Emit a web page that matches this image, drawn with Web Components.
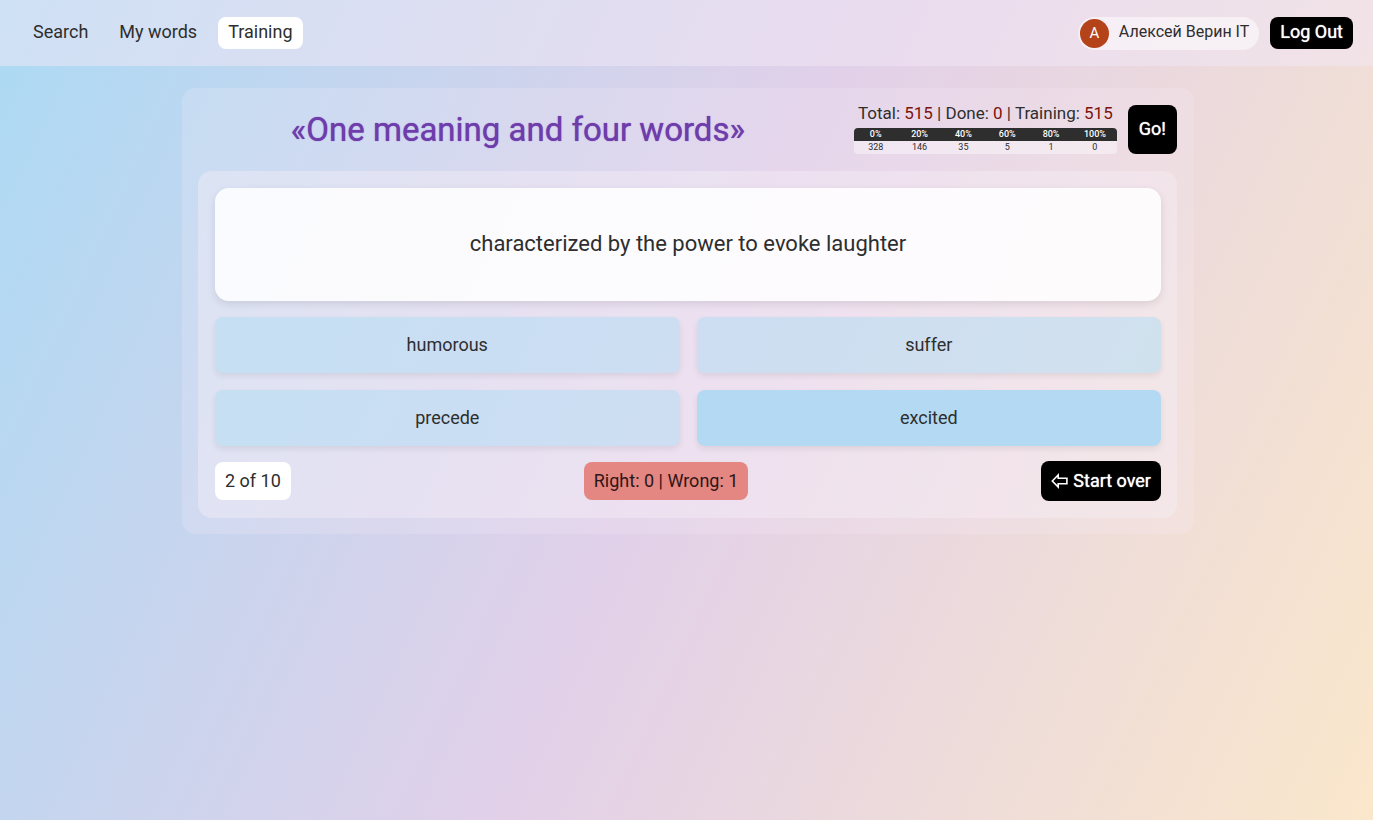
<!DOCTYPE html>
<html lang="en">
<head>
<meta charset="utf-8">
<meta name="viewport" content="width=device-width, initial-scale=1">
<title>Training</title>
<style>
html { min-height: 100%; background: linear-gradient(115deg, #acdaf4 0%, #e2d0e9 50%, #fae7cb 100%); }
body { margin: 0; font: 18px/22px Roboto, "Liberation Sans", sans-serif; color: #2e2e2e; }
</style>
</head>
<body>
<training-app></training-app>
<script>
const define = (name, html) => {
  const template = document.createElement('template');
  template.innerHTML = html;
  customElements.define(name, class extends HTMLElement {
    constructor() {
      super();
      this.attachShadow({ mode: 'open' }).append(template.content.cloneNode(true));
    }
  });
};

define('nav-link', `
<style>
:host { display: block; }
a { display: block; padding: 4px 10px 6px; border-radius: 8px; color: inherit; text-decoration: none; }
:host([current]) a { background: #fff; }
</style>
<a href="#"><slot></slot></a>`);

define('dark-button', `
<style>
:host { display: block; }
button { font: inherit; color: #fff; background: #000; border: 0; border-radius: 8px; margin: 0;
  display: flex; align-items: center; gap: 5px; cursor: pointer; white-space: nowrap;
  padding: var(--button-padding, 4px 10px 6px); text-shadow: 0 0 1px #fff; }
</style>
<button type="button"><slot></slot></button>`);

define('user-chip', `
<style>
:host { display: flex; align-items: center; gap: 10px; height: 33px; box-sizing: border-box;
  padding: 0 10px 0 2px; border-radius: 17px; background: rgba(255,255,255,.5); font-size: 16px; }
.avatar { width: 29px; height: 29px; border-radius: 50%; background: #b5431a; color: #fff;
  display: grid; place-items: center; font-size: 15px; }
.name { padding-bottom: 2px; }
</style>
<span class="avatar">А</span><span class="name"><slot></slot></span>`);

define('site-header', `
<style>
:host { display: flex; justify-content: space-between; align-items: center; height: 66px;
  box-sizing: border-box; padding: 0 20px 0 23px; background: rgba(242,232,245,.5); }
nav, div { display: flex; align-items: center; gap: 11px; }
</style>
<nav><nav-link>Search</nav-link><nav-link>My words</nav-link><nav-link current>Training</nav-link></nav>
<div><user-chip>Алексей Верин IT</user-chip><dark-button>Log Out</dark-button></div>`);

define('word-stats', `
<style>
:host { display: flex; flex-direction: column; justify-content: space-between; flex: none; width: 263px; height: 49px; }
p { margin: 0; font-size: 17px; line-height: 16px; white-space: nowrap; text-align: center; }
b { font-weight: 400; color: #7d120b; }
table { width: 100%; table-layout: fixed; border-collapse: collapse; border-radius: 4px; overflow: hidden;
  font-size: 9px; line-height: 13px; text-align: center; background: rgba(255,255,255,.4); }
th, td { padding: 0; }
th { font-weight: 500; color: #fff; background: #2e2e2e; }
</style>
<p>Total: <b>515</b> | Done: <b>0</b> | Training: <b>515</b></p>
<table>
<thead><tr><th>0%</th><th>20%</th><th>40%</th><th>60%</th><th>80%</th><th>100%</th></tr></thead>
<tbody><tr><td>328</td><td>146</td><td>35</td><td>5</td><td>1</td><td>0</td></tr></tbody>
</table>`);

define('answer-option', `
<style>
:host { display: block; }
button { width: 100%; height: 56px; font: inherit; color: inherit; border: 0; border-radius: 8px; cursor: pointer;
  background: rgba(173,219,244,.5); box-shadow: 0 3px 6px rgba(0,0,0,.08); }
:host([active]) button { background: #b4daf3; }
</style>
<button type="button"><slot></slot></button>`);

define('status-pill', `
<style>
:host { display: block; padding: 8px 10px; border-radius: 8px; background: #fff; }
:host([kind=score]) { background: #e48681; color: #2e1616; }
</style>
<slot></slot>`);

define('quiz-panel', `
<style>
:host { display: block; padding: 17px 16px 17px 17px; border-radius: 14px; background: rgba(248,240,248,.4); }
.question { display: grid; place-items: center; min-height: 111px; padding-bottom: 2px; margin-bottom: 16px; border-radius: 14px;
  background: rgba(255,255,255,.85); box-shadow: 0 3px 8px rgba(0,0,0,.1); font-size: 22px; line-height: 28px; }
.options { display: grid; grid-template-columns: 1fr 1fr; gap: 17px; }
footer { display: flex; justify-content: space-between; align-items: center; margin-top: 15px; }
dark-button { --button-padding: 9px 10px; }
svg { display: block; width: 17px; height: 16px; }
</style>
<div class="question">characterized by the power to evoke laughter</div>
<div class="options">
<answer-option>humorous</answer-option><answer-option>suffer</answer-option>
<answer-option>precede</answer-option><answer-option active>excited</answer-option>
</div>
<footer>
<status-pill>2 of 10</status-pill>
<status-pill kind="score">Right: 0 | Wrong: 1</status-pill>
<dark-button><svg viewBox="0 0 17 16" fill="none" stroke="#fff" stroke-width="1.6" aria-hidden="true"><path d="M1.3 8 7.2 2v3.2h8.7v5.6H7.2V14Z"/></svg>Start over</dark-button>
</footer>`);

define('training-app', `
<style>
:host { display: block; }
main { padding: 22px 19px 22px 22px; }
section { max-width: 1012px; box-sizing: border-box; margin: 0 auto; padding: 17px 17px 16px 16px;
  border-radius: 14px; background: rgba(248,240,248,.2); }
.top { display: flex; align-items: center; margin-bottom: 17px; }
h1 { flex: 1; margin: 0 16px 0 0; text-align: center; font-size: 33px; line-height: 40px; font-weight: 400;
  color: #6f3dab; text-shadow: 0 0 1px #6f3dab; }
.top dark-button { margin-left: 11px; --button-padding: 13px 11px 14px; }
</style>
<site-header></site-header>
<main><section>
<div class="top"><h1>«One meaning and four words»</h1><word-stats></word-stats><dark-button>Go!</dark-button></div>
<quiz-panel></quiz-panel>
</section></main>`);
</script>
</body>
</html>
